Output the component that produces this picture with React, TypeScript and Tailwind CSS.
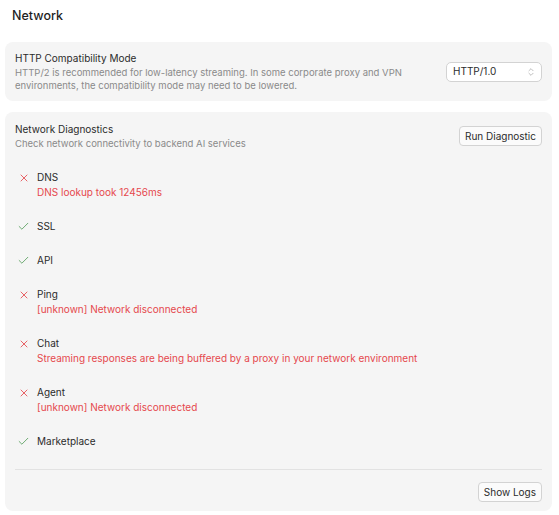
import { Check, X, ChevronsUpDown } from "lucide-react";

type Result = { name: string; ok: boolean; error?: string };

const RESULTS: Result[] = [
  { name: "DNS", ok: false, error: "DNS lookup took 12456ms" },
  { name: "SSL", ok: true },
  { name: "API", ok: true },
  { name: "Ping", ok: false, error: "[unknown] Network disconnected" },
  {
    name: "Chat",
    ok: false,
    error: "Streaming responses are being buffered by a proxy in your network environment",
  },
  { name: "Agent", ok: false, error: "[unknown] Network disconnected" },
  { name: "Marketplace", ok: true },
];

/* ── one diagnostic row ─────────────────────────────── */
function ResultRow({ r }: { r: Result }) {
  return (
    <li className="flex items-start gap-[7px] pl-[2px]">
      <span className="flex h-[15px] w-[13px] shrink-0 items-center justify-center">
        {r.ok ? (
          <Check className="h-[13px] w-[13px] text-[#4f9a55]" strokeWidth={1.5} />
        ) : (
          <X className="h-[12px] w-[12px] text-[#e5484d]" strokeWidth={1.7} />
        )}
      </span>
      <div className="min-w-0">
        <p className="text-[10px] leading-[15px] text-[#2b2b2b]">{r.name}</p>
        {r.error && (
          <p className="text-[10px] leading-[15px] text-[#e5484d]">{r.error}</p>
        )}
      </div>
    </li>
  );
}

export default function App() {
  return (
    <div
      className="min-h-screen bg-white pl-[5px] pr-[7px] pt-[7px] text-[#2b2b2b]"
      style={{ fontFamily: "Inter, 'Noto Sans', sans-serif" }}
    >
      <h1 className="mb-[17px] pl-[7px] text-[12.5px] font-medium leading-[18px] text-[#1f1f1f]">
        Network
      </h1>

      {/* HTTP mode */}
      <section className="flex items-center gap-4 rounded-lg bg-[#f5f5f5] px-[10px] py-[9px]">
        <div className="min-w-0 flex-1">
          <p className="text-[10px] leading-[15px] text-[#2b2b2b]">HTTP Compatibility Mode</p>
          <p className="text-[9.5px] leading-[13px] text-[#8a8a8a]">
            HTTP/2 is recommended for low-latency streaming. In some corporate proxy and VPN
            environments, the compatibility mode may need to be lowered.
          </p>
        </div>
        <button className="flex h-[20px] w-[96px] shrink-0 items-center justify-between rounded-[5px] border border-[#d3d3d3] bg-white pl-[6px] pr-[5px] text-[10px] text-[#2b2b2b]">
          HTTP/1.0
          <ChevronsUpDown className="h-[10px] w-[10px] text-[#9a9a9a]" strokeWidth={1.5} />
        </button>
      </section>

      {/* Diagnostics */}
      <section className="mt-[11px] rounded-lg bg-[#f5f5f5] px-[10px] pb-[9px] pt-[10px]">
        <div className="flex items-center gap-4">
          <div className="min-w-0 flex-1">
            <p className="text-[10px] leading-[15px] text-[#2b2b2b]">Network Diagnostics</p>
            <p className="text-[9.5px] leading-[13px] text-[#8a8a8a]">
              Check network connectivity to backend AI services
            </p>
          </div>
          <button className="h-[20px] shrink-0 rounded-[4px] border border-[#d3d3d3] bg-[#fbfbfb] px-[5px] text-[10px] text-[#2b2b2b]">
            Run Diagnostic
          </button>
        </div>

        <ul className="mt-[20px] flex flex-col gap-[19px]">
          {RESULTS.map((r) => (
            <ResultRow key={r.name} r={r} />
          ))}
        </ul>

        <div className="mt-[20px] border-t border-[#e2e2e2] pt-[12px]">
          <div className="flex justify-end">
            <button className="h-[20px] rounded-[4px] border border-[#d3d3d3] bg-[#fbfbfb] px-[5px] text-[10px] text-[#2b2b2b]">
              Show Logs
            </button>
          </div>
        </div>
      </section>
    </div>
  );
}
